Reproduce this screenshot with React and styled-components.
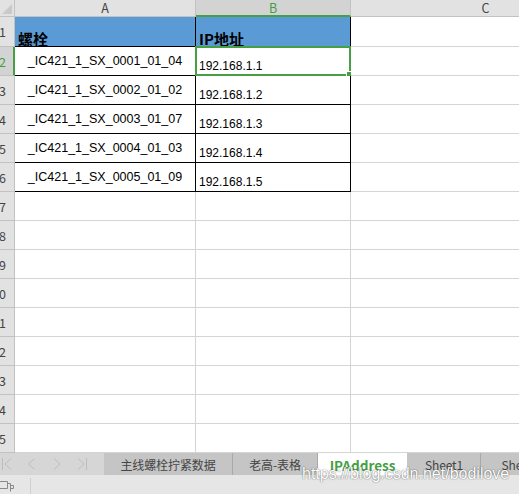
import React from "react";
import styled, { createGlobalStyle } from "styled-components";

const GREEN = "#45a045";
const GRID = "#d4d4d4";
const HEAD_LINE = "#c2c2c2";

const Global = createGlobalStyle`
  html, body {
    margin: 0;
    padding: 0;
    background: #fff;
    overflow: hidden;
  }
  body {
    font-family: "Liberation Sans", Arial, sans-serif;
  }
`;

const bolts = [
  "_IC421_1_SX_0001_01_04",
  "_IC421_1_SX_0002_01_02",
  "_IC421_1_SX_0003_01_07",
  "_IC421_1_SX_0004_01_03",
  "_IC421_1_SX_0005_01_09",
];

const tabs = [
  { name: "主线螺栓拧紧数据", w: 129 },
  { name: "老高-表格", w: 85 },
  { name: "IPAddress", w: 90, active: true },
  { name: "Sheet1", w: 73 },
  { name: "Sheet2", w: 80 },
];

export default function App() {
  const rowCount = 15;

  return (
    <Page>
      <Global />
      <Sheet>
        <Corner>
          <svg width="14" height="16" viewBox="0 0 14 16">
            <path d="M12 4 L12 14 L2 14 Z" fill="#c9c9c9" />
          </svg>
        </Corner>
        <ColHead>A</ColHead>
        <ColHead $active>B</ColHead>
        <ColHead>C</ColHead>

        {Array.from({ length: rowCount }, (_, i) => {
          const r = i + 1;
          const inTable = r <= 6;
          return (
            <React.Fragment key={r}>
              <RowHead $active={r === 2}>{r}</RowHead>
              {r === 1 ? (
                <>
                  <Cell $header $black>螺栓</Cell>
                  <Cell $header $black>IP地址</Cell>
                </>
              ) : inTable ? (
                <>
                  <Cell $center $black>{bolts[r - 2]}</Cell>
                  <Cell $ip $black>
                    192.168.1.{r - 1}
                    {r === 2 && (
                      <Selection>
                        <Handle />
                      </Selection>
                    )}
                  </Cell>
                </>
              ) : (
                <>
                  <Cell />
                  <Cell />
                </>
              )}
              <Cell />
            </React.Fragment>
          );
        })}
      </Sheet>

      <Bottom>
        <TabBar>
          <Nav>
            <NavIcon viewBox="0 0 12 14">
              <path d="M1.5 1 V13 M10 1.5 L4 7 L10 12.5" />
            </NavIcon>
            <NavIcon viewBox="0 0 12 14">
              <path d="M8.5 1.5 L2.5 7 L8.5 12.5" />
            </NavIcon>
            <NavIcon viewBox="0 0 12 14">
              <path d="M3 1.5 L9 7 L3 12.5" />
            </NavIcon>
            <NavIcon viewBox="0 0 12 14">
              <path d="M2 1.5 L8 7 L2 12.5 M10.5 1 V13" />
            </NavIcon>
          </Nav>
          {tabs.map((t) => (
            <Tab key={t.name} $w={t.w} $active={t.active}>
              {t.name}
            </Tab>
          ))}
        </TabBar>
        <StatusBar>
          <StatusIcon>
            <svg width="18" height="14" viewBox="0 0 18 14">
              <path
                d="M0.5 2.5 H9.5 V9.5 H0.5 Z M9.5 4.5 H12.5 V12.5 M12.5 6.5 H15.5 V9.5 H12.5"
                fill="none"
                stroke="#8a8a8a"
                strokeWidth="1"
              />
            </svg>
          </StatusIcon>
        </StatusBar>
        <Watermark>https://blog.csdn.net/bodilove</Watermark>
      </Bottom>
    </Page>
  );
}

/* Styled Components */
const Page = styled.div`
  width: 519px;
  height: 494px;
  overflow: hidden;
  display: flex;
  flex-direction: column;
`;

const Sheet = styled.div`
  display: grid;
  grid-template-columns: 15px 181px 155px 270px;
  grid-template-rows: 17px 30px repeat(14, 29px);
  height: 453px;
  width: 621px;
`;

const Corner = styled.div`
  background: #e2e2e2;
  border-right: 1px solid ${HEAD_LINE};
  border-bottom: 1px solid ${HEAD_LINE};
  box-sizing: border-box;
  display: flex;
  align-items: flex-end;
  justify-content: flex-end;
  overflow: hidden;

  svg {
    display: block;
  }
`;

const ColHead = styled.div`
  box-sizing: border-box;
  background: ${(p) => (p.$active ? "#d3d3d3" : "#e2e2e2")};
  border-right: 1px solid ${HEAD_LINE};
  border-bottom: ${(p) =>
    p.$active ? `2px solid ${GREEN}` : `1px solid ${HEAD_LINE}`};
  color: ${(p) => (p.$active ? GREEN : "#444")};
  font-family: "Noto Sans CJK SC", "Noto Sans", sans-serif;
  font-size: 12.5px;
  line-height: 16px;
  text-align: center;
`;

const RowHead = styled.div`
  box-sizing: border-box;
  background: ${(p) => (p.$active ? "#d3d3d3" : "#e2e2e2")};
  border-right: ${(p) =>
    p.$active ? `2px solid ${GREEN}` : `1px solid ${HEAD_LINE}`};
  border-bottom: 1px solid ${HEAD_LINE};
  color: ${(p) => (p.$active ? GREEN : "#444")};
  font-family: "Noto Sans CJK SC", "Noto Sans", sans-serif;
  font-size: 12.5px;
  display: flex;
  align-items: center;
  justify-content: flex-end;
  padding-right: ${(p) => (p.$active ? "7px" : "8px")};
  overflow: hidden;
  white-space: nowrap;
`;

const Cell = styled.div`
  position: relative;
  box-sizing: border-box;
  border-right: 1px solid ${(p) => (p.$black ? "#000" : GRID)};
  border-bottom: 1px solid ${(p) => (p.$black ? "#000" : GRID)};
  background: ${(p) => (p.$header ? "#5b9bd5" : "#fff")};
  color: #000;
  white-space: nowrap;
  display: flex;
  align-items: ${(p) => (p.$center ? "center" : "flex-end")};
  justify-content: ${(p) => (p.$center ? "center" : "flex-start")};
  padding: ${(p) =>
    p.$header ? "0 0 0 3px" : p.$ip ? "0 0 1px 3px" : "0"};
  font-family: ${(p) =>
    p.$header
      ? `"Noto Sans CJK SC", "Noto Sans", sans-serif`
      : `"Liberation Sans", Arial, sans-serif`};
  font-weight: ${(p) => (p.$header ? 700 : 400)};
  font-size: ${(p) => (p.$header ? "15px" : p.$center ? "12.5px" : "12px")};
  line-height: 15px;
`;

const Selection = styled.div`
  position: absolute;
  left: -1px;
  top: -1px;
  right: -1px;
  bottom: -1px;
  border: 2px solid ${GREEN};
  pointer-events: none;
`;

const Handle = styled.div`
  position: absolute;
  right: -4px;
  bottom: -4px;
  width: 5px;
  height: 5px;
  background: ${GREEN};
  border: 1px solid #fff;
`;

const Bottom = styled.div`
  position: relative;
  flex: 1;
  display: flex;
  flex-direction: column;
`;

const TabBar = styled.div`
  height: 22px;
  display: flex;
  background: #d6d6d6;
  font-family: "Noto Sans CJK SC", "Noto Sans", sans-serif;
  font-size: 12px;
  white-space: nowrap;
`;

const Nav = styled.div`
  width: 104px;
  flex: none;
  display: flex;
  align-items: center;
  gap: 13px;
  padding-left: 1px;
  box-sizing: border-box;
`;

const NavIcon = styled.svg`
  width: 12px;
  height: 14px;
  fill: none;
  stroke: #bdbdbd;
  stroke-width: 1;
`;

const Tab = styled.div`
  flex: none;
  width: ${(p) => p.$w}px;
  box-sizing: border-box;
  display: flex;
  align-items: center;
  justify-content: center;
  background: ${(p) => (p.$active ? "#fff" : "#c5c5c5")};
  border-right: 1px solid ${(p) => (p.$active ? "#c5c5c5" : "#a9a9a9")};
  color: ${(p) => (p.$active ? GREEN : "#444")};
  font-weight: ${(p) => (p.$active ? 700 : 400)};
  font-size: ${(p) => (p.$active ? "13.5px" : "12px")};
  letter-spacing: ${(p) => (p.$active ? "0" : "-0.1px")};
  height: ${(p) => (p.$active ? "23px" : "22px")};
`;

const StatusBar = styled.div`
  flex: 1;
  background: #e6e6e6;
  display: flex;
  align-items: stretch;
`;

const StatusIcon = styled.div`
  width: 31px;
  box-sizing: border-box;
  border-right: 1px solid #cfcfcf;
  margin-top: 3px;
  display: flex;
  align-items: center;

  svg {
    display: block;
    margin-left: -2px;
  }
`;

const Watermark = styled.div`
  position: absolute;
  left: 302px;
  top: 12px;
  font-family: "Liberation Sans", Arial, sans-serif;
  font-size: 16px;
  line-height: 18px;
  color: #fff;
  text-shadow: 0 0 1px rgba(0, 0, 0, 0.6), 0 0 2px rgba(0, 0, 0, 0.25);
  white-space: nowrap;
  pointer-events: none;
`;
